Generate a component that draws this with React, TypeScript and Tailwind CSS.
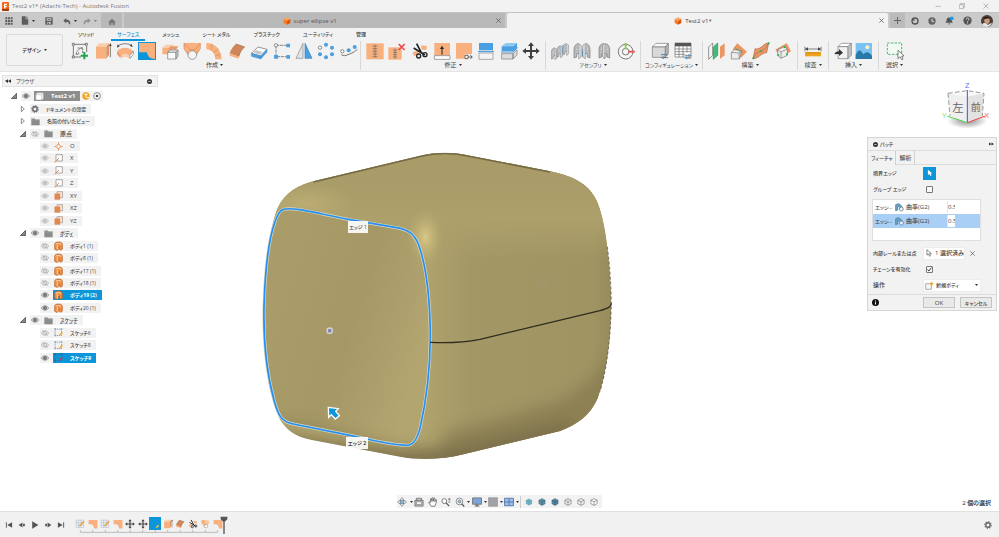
import { useState, type ReactNode } from 'react'

type P = { children?: ReactNode; className?: string }

/* ---------- icon helpers ---------- */

// ribbon icons are drawn on a 54 unit grid
function R({ children, className = 'h-[18px] w-[18px]' }: P) {
  return (
    <svg viewBox="0 0 54 54" className={`shrink-0 ${className}`} fill="none" aria-hidden="true">
      {children}
    </svg>
  )
}

const OR = '#f8b07f'
const BL = '#4a9fe0'
const DK = '#404040'

const MoveArrows = () => (
  <path
    d="M27 1l9 11h-6v12h12v-6l11 9-11 9v-6H30v12h6l-9 11-9-11h6V30H12v6L1 27l11-9v6h12V12h-6z"
    fill={DK}
  />
)

const createIcons: [string, ReactNode][] = [
  ['スケッチを作成', <>
    <path d="M11 7H46M7 12V42M12 45H30M47 12V30" stroke={DK} strokeWidth="2" />
    <path d="M4 4h6v6H4zM43 4h6v6h-6zM4 42h6v6H4z" fill="#fff" stroke={DK} strokeWidth="2" />
    <path d="M15 37c2-10 8-17 20-20M15 37h8v-6M20 18h15v15" stroke={DK} strokeWidth="2" strokeDasharray="6 2" />
    <path d="M40 30v22M29 41h22" stroke="#19a84b" strokeWidth="6" />
  </>],
  ['押し出し', <>
    <path d="M6 14l8-10h32l-8 10z" fill="#fbcfae" />
    <path d="M6 14h31v36H6z" fill={OR} />
    <path d="M37 14l8-10v34l-8 12z" fill="#dc9361" />
    <path d="M49 46V10" stroke={DK} strokeWidth="2" />
    <path d="M49 3l4 9h-8z" fill={DK} />
  </>],
  ['回転', <>
    <path d="M5 13C16 3 36 3 47 11" stroke={DK} strokeWidth="2" />
    <path d="M3 17l2-10 6 6zM50 15l-9-3 6-6z" fill={DK} />
    <path d="M3 28c10-14 38-14 49 0L41 41c-6-6-20-6-26 0z" fill={OR} />
    <path d="M3 28v9l10 11 3-8z" fill="#e79c69" />
    <path d="M15 41c6-6 20-6 26 0v9c-7-7-19-7-26 0z" fill="#fbcfae" />
    <path d="M41 41l11-13v9L42 49z" fill="#fff" stroke="#777" strokeWidth="2" />
  </>],
  ['パッチ', <>
    <path d="M0 0h54v54H0z" fill="#0c95d8" />
    <path d="M3 3h48v48c-14 0-22-7-24-20H3z" fill={OR} />
  </>],
  ['スイープ', <>
    <path d="M4 17l10-9h26l-8 9z" fill="#fbcfae" />
    <path d="M4 17h28v20H4z" fill={OR} />
    <path d="M19 22l10-9h23l-7 10z" fill="#e79c69" />
    <path d="M20 31l7-7h24l-6 7z" fill="#eee" stroke="#777" strokeWidth="2" />
    <path d="M20 31h25v20H20z" fill="#fafafa" stroke="#777" strokeWidth="2" />
    <path d="M45 31l6-7v18l-6 9z" fill="#ccc" stroke="#777" strokeWidth="2" />
  </>],
  ['ロフト', <>
    <path d="M3 3h49v17L38 44H17L3 20z" fill={OR} />
    <path d="M3 3l18 21h14L52 3M3 3v17l14 20M52 3v17L38 40" stroke="#d68a58" strokeWidth="2" />
    <circle cx="28" cy="39" r="13" fill="#f4f4f4" stroke="#777" strokeWidth="2" />
  </>],
  ['オフセット', <>
    <path d="M4 3c26 0 45 20 46 49H31C31 34 20 23 4 22z" fill={OR} />
    <path d="M21 5l-3 20M41 20L25 32M47 36l-17 6" stroke="#d68a58" strokeWidth="2" />
  </>],
  ['厚み', <>
    <path d="M5 34C9 21 17 11 24 6l26 9c-8 5-14 16-18 29z" fill="#cf8759" />
    <path d="M24 6l26 9c-8 5-14 16-18 29" stroke="#9c6240" strokeWidth="2" />
    <path d="M5 34l27 10v6L5 41z" fill={OR} />
  </>],
  ['境界塗り潰し', <>
    <path d="M4 34l20-19 27 7-19 20z" fill="#fafafa" stroke="#666" strokeWidth="2" />
    <path d="M4 34l28 8v9L4 43zM32 42l19-20v9L32 51z" fill={BL} stroke="#2f7fb9" strokeWidth="1" />
    <path d="M11 32l7-7 19 5-7 8z" fill="#bfc6cc" />
  </>],
  ['矩形状パターン', <>
    <path d="M9 10H45M9 10V44H45" stroke="#555" strokeWidth="2" strokeDasharray="10 2" />
    <circle cx="9" cy="10" r="5" fill="#fff" stroke="#555" strokeWidth="2" />
    <path d="M40 5h11v11H40zM3 39h12v11H3zM40 39h11v11H40z" fill={BL} />
  </>],
  ['ミラー', <>
    <path d="M24 4v45H3z" fill="#e3e3e3" stroke="#888" strokeWidth="2" />
    <path d="M30 4v45h21z" fill={BL} stroke="#3987c4" strokeWidth="2" />
  </>],
  ['円形状パターン', <>
    <circle cx="27" cy="8" r="6" fill={BL} />
    <circle cx="45" cy="17" r="6" fill={BL} />
    <circle cx="45" cy="37" r="6" fill={BL} />
    <circle cx="27" cy="46" r="6" fill={BL} />
    <circle cx="9" cy="37" r="6" fill={BL} />
    <circle cx="9" cy="17" r="5" fill="#fff" stroke="#555" strokeWidth="2" />
  </>],
  ['パス上のパターン', <>
    <path d="M4 38c7 5 14 3 20 0s17-5 28-16" stroke="#777" strokeWidth="3" />
    <circle cx="7" cy="28" r="5" fill="#fff" stroke="#555" strokeWidth="2" />
    <circle cx="26" cy="25" r="6" fill={BL} />
    <circle cx="44" cy="15" r="6" fill={BL} />
  </>],
]

const modifyIcons: [string, ReactNode][] = [
  ['ステッチ', <>
    <path d="M1 4h52v48H1z" fill={OR} />
    <path d="M27 8v38M20 12h14M20 20h14M20 28h14M20 36h14M20 44h14" stroke="#666" strokeWidth="2" />
  </>],
  ['ステッチ解除', <>
    <path d="M1 16h40v37H1z" fill={OR} />
    <path d="M21 20v30M15 24h12M15 31h12M15 38h12M15 45h12" stroke="#666" strokeWidth="2" />
    <path d="M32 6l18 18M50 6L32 24" stroke="#ee4a4f" strokeWidth="5" />
  </>],
  ['トリム', <>
    <path d="M4 33l14-8 6 10-14 8zM30 10l18 2-2 12-14-1z" fill={OR} />
    <path d="M17 5l15 29M8 18l34 21" stroke="#222" strokeWidth="5" />
    <circle cx="23" cy="42" r="6" stroke="#222" strokeWidth="4" />
    <circle cx="42" cy="38" r="6" stroke="#222" strokeWidth="4" />
  </>],
  ['延長', <>
    <path d="M4 3h47v38H4z" fill={OR} />
    <path d="M4 41h47v11H4z" fill="#fff" stroke="#777" strokeWidth="2" />
    <path d="M27 38V18" stroke="#222" strokeWidth="3" />
    <path d="M27 11l6 10H21z" fill="#222" />
  </>],
  ['マージ', <>
    <path d="M3 3h48v34H29v13H3z" fill={OR} />
    <path d="M30 40h9v10h-9zM39 45h12M46 40l6 5-6 5" fill="#fff" stroke="#222" strokeWidth="2" />
  </>],
  ['面を分割', <>
    <path d="M6 3h42v22H6z" fill={BL} />
    <path d="M6 33h42v19H6z" fill="#f4f4f4" stroke="#888" strokeWidth="2" />
    <path d="M3 29h48" stroke="#3a95da" strokeWidth="3" />
  </>],
  ['ボディを分割', <>
    <path d="M5 13l12-10h34l-11 10z" fill="#8ec9f2" />
    <path d="M5 13h35v14H5zM40 13L51 3v14L40 28z" fill={BL} />
    <path d="M3 30h36l14-13" stroke="#3a95da" strokeWidth="3" />
    <path d="M5 35h34v16H5zM39 35l12-11v15L39 51z" fill="#dedede" stroke="#777" strokeWidth="2" />
  </>],
  ['移動/コピー', <MoveArrows />],
]

const Plate = ({ x = 0 }: { x?: number }) => (
  <g transform={`translate(${x} 0)`}>
    <path d="M2 48V22C2 12 8 5 15 5l8 5v34l-6 6V34l-7 2v9z" fill="#b9bcbf" stroke="#777" strokeWidth="2" />
    <path d="M15 5l8 5v34l-6 6V14z" fill="#dcdedf" stroke="#888" strokeWidth="1" />
    <circle cx="10" cy="22" r="3" fill="#f3f3f3" stroke="#777" />
  </g>
)

const assemblyIcons: [string, ReactNode][] = [
  ['新規コンポーネント', <>
    <g transform="translate(-1 14) scale(.78)"><Plate /></g>
    <g transform="translate(16 8) scale(.78)"><Plate /></g>
    <g transform="translate(34 1) scale(.78)"><Plate /></g>
    <path d="M34 8v24" stroke={BL} strokeWidth="2" />
  </>],
  ['ジョイント', <>
    <Plate x={1} />
    <path d="M29 44c-2-14 0-26 7-31" stroke={BL} strokeWidth="3" />
    <g transform="translate(54 0) scale(-1 1)"><Plate x={1} /></g>
  </>],
  ['位置固定ジョイント', <>
    <Plate x={10} />
    <g transform="translate(54 0) scale(-1 1)"><Plate x={8} /></g>
  </>],
  ['モーション', <>
    <circle cx="26" cy="29" r="22" fill="#f6f6f6" stroke="#777" strokeWidth="3" />
    <circle cx="26" cy="29" r="10" stroke="#777" strokeWidth="3" />
    <path d="M23 3h6v19h-6z" fill="#8fce5b" />
    <path d="M34 26h19v6H34z" fill="#ee5357" />
  </>],
]

const configIcons: [string, ReactNode][] = [
  ['コンフィギュレーション', <>
    <path d="M4 15L15 4h37L43 15z" fill="#f8f8f8" stroke="#777" strokeWidth="2" />
    <path d="M4 15h39v31H4z" fill="#d8d8d8" stroke="#777" strokeWidth="2" />
    <path d="M43 15l9-11v29L43 46z" fill="#b5b5b5" stroke="#777" strokeWidth="2" />
    <path d="M30 38h22M30 47h22" stroke="#444" strokeWidth="2" />
    <path d="M41 34h4v8h-4zM35 43h4v8h-4z" fill={BL} />
  </>],
  ['パラメータ表', <>
    <path d="M3 3h48v42H3z" fill="#fff" stroke="#666" strokeWidth="2" />
    <path d="M3 3h48v10H3z" fill="#555" />
    <path d="M3 21h48M3 29h48M3 37h30M15 13v32M27 13v32M39 13v18" stroke="#666" strokeWidth="2" />
    <path d="M32 40h20M32 48h20" stroke="#444" strokeWidth="2" />
    <path d="M43 36h4v8h-4zM36 44h4v8h-4z" fill={BL} />
  </>],
]

const constructIcons: [string, ReactNode][] = [
  ['オフセット平面', <>
    <path d="M2 15L14 3v37L2 52z" fill="#f4f4f4" stroke="#666" strokeWidth="2" />
    <path d="M16 15L29 3v37L16 52z" fill="#45b97a" stroke="#2c8b58" strokeWidth="2" />
    <path d="M36 14L50 4v36L36 51z" fill="#ec9763" />
  </>],
  ['傾斜平面', <>
    <path d="M22 4l29 25-18 18L8 22z" fill="#ec9763" />
    <path d="M4 31l9-8 22 3-7 25H4z" fill="#ececec" stroke="#777" strokeWidth="2" />
    <path d="M28 51l-1-18L4 31M27 33l8-7" stroke="#777" strokeWidth="2" />
    <path d="M14 16l22 17" stroke="#2fae62" strokeWidth="2" />
  </>],
  ['3点を通過する平面', <>
    <path d="M3 50L9 20C25 26 34 3 50 3l-6 29C28 32 20 50 3 50z" fill="#ec9763" stroke="#a86a43" strokeWidth="2" />
    <path d="M3 50C18 16 36 38 50 3" stroke="#777" strokeWidth="2" />
    <circle cx="4" cy="49" r="3" fill="#27ac5a" /><circle cx="50" cy="4" r="3" fill="#27ac5a" /><circle cx="27" cy="27" r="3" fill="#27ac5a" />
  </>],
  ['平面に接する平面', <>
    <path d="M4 23L38 3l13 25-31 20z" fill="#ec9763" />
    <path d="M11 23l20-9 9 7v19l-19 9-10-8z" fill="#ececec" stroke="#777" strokeWidth="2" />
    <path d="M11 23l10 7 19-9M21 30v19" stroke="#777" strokeWidth="2" />
    <circle cx="13" cy="39" r="3" fill="#27ac5a" /><circle cx="32" cy="15" r="3" fill="#27ac5a" /><circle cx="39" cy="37" r="3" fill="#27ac5a" />
  </>],
]

const inspectIcons: [string, ReactNode][] = [
  ['計測', <>
    <path d="M3 14v14M51 14v14M5 21h44" stroke="#444" strokeWidth="2" />
    <path d="M3 21l9-5v10zM51 21l-9-5v10z" fill="#444" />
    <path d="M3 30h48v13H3z" fill="#eda31f" />
    <path d="M9 30v5M15 30v5M21 30v5M27 30v5M33 30v5M39 30v5M45 30v5" stroke="#b97a10" strokeWidth="2" />
  </>],
]

const insertIcons: [string, ReactNode][] = [
  ['派生', <>
    <path d="M12 14L22 4h30L42 14z" fill="#fff" stroke="#777" strokeWidth="2" />
    <path d="M12 14h30v36H12z" fill="#f2f2f2" stroke="#777" strokeWidth="2" />
    <path d="M42 14L52 4v35L42 50z" fill="#c5c5c5" stroke="#777" strokeWidth="2" />
    <path d="M1 37c2-6 7-9 14-9v-7l12 11-12 10v-6c-6 0-10 0-14 1z" fill="#333" />
  </>],
  ['キャンバス', <>
    <path d="M2 3h49v48H2z" fill="#7cc1f3" />
    <path d="M2 39c9-20 15-16 23-2 9-9 15-9 26 4v10H2z" fill="#2878a8" />
    <circle cx="37" cy="16" r="6" fill="#fff4c4" />
  </>],
]

const selectIcons: [string, ReactNode][] = [
  ['選択', <>
    <path d="M4 3h43v34H4z" fill="#f0faf2" stroke="#49b56b" strokeWidth="3" strokeDasharray="7 4" />
    <path d="M36 25v25l6-6 5 9 4-2-4-9h8z" fill="#fff" stroke="#444" strokeWidth="2" />
  </>],
]

/* ---------- shared bits ---------- */

const Caret = ({ className = '' }: P) => (
  <svg viewBox="0 0 6 4" className={`h-[2px] w-[3px] shrink-0 ${className}`} aria-hidden="true">
    <path d="M0 0h6L3 4z" fill="#333" />
  </svg>
)

function FusionCube({ className = 'h-[8px] w-[8px]' }: P) {
  return (
    <svg viewBox="0 0 24 24" className={className} aria-hidden="true">
      <path d="M12 1l10 5-10 5L2 6z" fill="#ffa45c" />
      <path d="M2 6l10 5v12L2 18z" fill="#ff7a1f" />
      <path d="M22 6l-10 5v12l10-5z" fill="#d9560b" />
    </svg>
  )
}

function Group({ label, icons, className }: { label: string; icons: [string, ReactNode][]; className: string }) {
  return (
    <div className={`flex shrink-0 flex-col border-r border-[#d8d8d8] ${className}`}>
      <div className="flex h-[19px] items-center justify-around">
        {icons.map(([name, art]) => (
          <button key={name} aria-label={name} title={name} className="flex">
            <R>{art}</R>
          </button>
        ))}
      </div>
      <button className="flex h-[10px] items-center justify-center gap-[2px] self-center whitespace-nowrap">
        {label}
        <Caret />
      </button>
    </div>
  )
}

/* ---------- top bars ---------- */

function TitleBar() {
  return (
    <div className="flex h-[12px] items-center bg-[#f2f2f2] pl-[2px] text-[#777]">
      <svg viewBox="0 0 24 27" className="mr-[2px] h-[9px] w-[8px]" aria-hidden="true">
        <rect width="21" height="27" rx="3" fill="#f26a1b" />
        <path d="M6 5h9v4h-5v3h4v4h-4v4H6z" fill="#fff" />
        <path d="M0 20h21v4q0 3-3 3H3q-3 0-3-3z" fill="#a53c06" />
      </svg>
      <span className="flex-1">Test2 v1* (Adachi-Tech) - Autodesk Fusion</span>
      <div className="flex gap-[18px] pr-[10px]">
        <button aria-label="最小化"><svg viewBox="0 0 14 14" className="h-[6px] w-[6px]" stroke="#777" fill="none"><path d="M1 8h13" /></svg></button>
        <button aria-label="元に戻す"><svg viewBox="0 0 14 14" className="h-[6px] w-[6px]" stroke="#777" fill="none"><path d="M1 4h9v9H1zM4 4V1h9v9h-3" /></svg></button>
        <button aria-label="閉じる"><svg viewBox="0 0 14 14" className="h-[6px] w-[6px]" stroke="#666" fill="none"><path d="M1 1l12 12M13 1L1 13" /></svg></button>
      </div>
    </div>
  )
}

const CloseX = () => (
  <svg viewBox="0 0 14 14" className="h-[5px] w-[5px]" stroke="#555" strokeWidth="2" fill="none" aria-hidden="true">
    <path d="M1 1l12 12M13 1L1 13" />
  </svg>
)

function TabBar() {
  return (
    <div className="flex h-[16px] border-t border-[#c4c4c4] bg-[#cacaca] text-[#555]">
      <div className="flex w-[101px] shrink-0 items-center pl-[5px] text-[#5c5c5c]">
        <button aria-label="データパネル">
          <svg viewBox="0 0 24 24" className="h-[8px] w-[8px]" fill="#5c5c5c">
            <path d="M1 1h6v6H1zM9 1h6v6H9zM17 1h6v6h-6zM1 9h6v6H1zM9 9h6v6H9zM17 9h6v6h-6zM1 17h6v6H1zM9 17h6v6H9zM17 17h6v6h-6z" />
          </svg>
        </button>
        <button aria-label="ファイル" className="ml-2 flex items-center gap-[3px]">
          <svg viewBox="0 0 24 28" className="h-[9px] w-[8px]" fill="#5c5c5c"><path d="M2 1h12v9h8v17H2z" /><path d="M16 1l6 7h-6z" /></svg>
          <Caret />
        </button>
        <button aria-label="保存" className="ml-[10px]">
          <svg viewBox="0 0 24 24" className="h-[8px] w-[8px]"><path d="M1 1h22v22H1z" fill="#5c5c5c" /><path d="M5 4h14v7H5zM7 15h10v6H7z" fill="#cacaca" /><path d="M8 6h8v2H8zM9 17h3v4H9z" fill="#5c5c5c" /></svg>
        </button>
        <button aria-label="元に戻す" className="ml-[10px] flex items-center gap-[3px]">
          <svg viewBox="0 0 24 24" className="h-[8px] w-[8px]"><path d="M10 3v5c9 0 13 5 12 14h-4c0-6-3-8-8-8v5l-9-8z" fill="#5c5c5c" /></svg>
          <Caret />
        </button>
        <button aria-label="やり直し" className="ml-[6px] flex items-center gap-[3px] opacity-50">
          <svg viewBox="0 0 24 24" className="h-[8px] w-[8px]"><path d="M14 3v5C5 8 1 13 2 22h4c0-6 3-8 8-8v5l9-8z" fill="#5c5c5c" /></svg>
          <Caret />
        </button>
      </div>
      <button aria-label="ホーム" className="flex w-[21px] shrink-0 items-center justify-center bg-[#b9b9b9] pt-[2px]">
        <svg viewBox="0 0 24 24" className="h-[8px] w-[8px]" fill="#777"><path d="M12 2l12 11h-4v9h-6v-7h-4v7H4v-7-2H0z" /></svg>
      </button>
      <div className="ml-[2px] flex flex-1 items-center bg-[#b9b9b9] pr-[4px]">
        <button className="flex flex-1 items-center justify-center gap-[2px]"><FusionCube />super ellipse v1</button>
        <button aria-label="super ellipse v1 を閉じる"><CloseX /></button>
      </div>
      <div className="ml-[2px] flex flex-1 items-center rounded-t-[2px] bg-[#f2f2f2] pr-[4px] text-[#444]">
        <button className="flex flex-1 items-center justify-center gap-[3px]"><FusionCube />Test2 v1*</button>
        <button aria-label="Test2 v1* を閉じる"><CloseX /></button>
      </div>
      <button aria-label="新規タブ" className="ml-[2px] flex w-[15px] shrink-0 items-center justify-center bg-[#bbb]">
        <svg viewBox="0 0 14 14" className="h-[7px] w-[7px]" stroke="#666" strokeWidth="2"><path d="M7 0v14M0 7h14" /></svg>
      </button>
      <div className="flex w-[94px] shrink-0 items-center gap-[9px] pl-[6px]">
        <button aria-label="拡張機能"><svg viewBox="0 0 24 24" className="h-[8px] w-[8px]" fill="none"><circle cx="12" cy="12" r="9" stroke="#555" strokeWidth="4" /><path d="M8 4l4 8-8-2z" fill="#555" /></svg></button>
        <button aria-label="ジョブの状態"><svg viewBox="0 0 24 24" className="h-[8px] w-[8px]"><circle cx="12" cy="12" r="11" fill="#666" /><path d="M12 5v8h6" stroke="#ddd" strokeWidth="3" fill="none" /></svg></button>
        <button aria-label="通知"><svg viewBox="0 0 24 24" className="h-[9px] w-[9px]"><path d="M11 4c6 0 7 5 7 9l3 5H1l3-5c0-4 1-9 7-9zM8 20h6l-3 3z" fill="#555" /><circle cx="18" cy="6" r="5" fill="#1e9ae0" /></svg></button>
        <button aria-label="ヘルプ"><svg viewBox="0 0 24 24" className="h-[9px] w-[9px]"><circle cx="12" cy="12" r="11" fill="#555" /><path d="M8 9c0-5 8-5 8 0 0 3-4 3-4 6M12 17v3" stroke="#eee" strokeWidth="2" fill="none" /></svg></button>
        <button aria-label="アカウント">
          <svg viewBox="0 0 36 36" className="h-[12px] w-[12px]">
            <circle cx="18" cy="18" r="18" fill="#4b3b34" />
            <path d="M10 14c0-8 16-8 16 0v7c-3 8-13 8-16 0z" fill="#c99a80" />
            <path d="M3 28c6-6 10-4 15 0s9-4 15-4c-5 14-24 16-30 4z" fill="#e4e6ea" />
            <path d="M8 12C10 3 26 2 28 13l-5-3-8 1z" fill="#241c1a" />
          </svg>
        </button>
      </div>
    </div>
  )
}

const ribbonTabs = ['ソリッド', 'サーフェス', 'メッシュ', 'シート メタル', 'プラスチック', 'ユーティリティ', '管理']

function Ribbon() {
  const [tab, setTab] = useState('サーフェス')
  return (
    <div className="flex h-[44px] shrink-0 border-b border-[#e4e4e4] bg-[#f2f2f2]">
      <button className="mt-[6px] ml-[6px] flex h-[32px] w-[57px] shrink-0 items-center justify-center gap-[3px] rounded-[2px] border border-[#dadada] text-[5px] font-bold">
        デザイン
        <Caret />
      </button>
      <div className="ml-[6px] flex flex-col">
        <div className="flex h-[13px] items-end gap-[11px] pl-[3px] text-[5px]">
          {ribbonTabs.map(t => (
            <button
              key={t}
              onClick={() => setTab(t)}
              className={`h-[12px] border-b-2 px-[6px] font-medium whitespace-nowrap ${
                t === tab ? 'border-[#0c95d8] text-[#0c95d8]' : 'border-transparent'
              }`}
            >
              {t}
            </button>
          ))}
        </div>
        <div className="flex">
          <Group label="作成" icons={createIcons} className="w-[292px]" />
          <Group label="修正" icons={modifyIcons} className="w-[185px] px-[3px]" />
          <Group label="アセンブリ" icons={assemblyIcons} className="w-[95px] px-[3px] text-[5px]" />
          <Group label="コンフィギュレーション" icons={configIcons} className="w-[62px] px-[7px] text-[5px]" />
          <Group label="構築" icons={constructIcons} className="w-[95px] px-[3px]" />
          <Group label="検査" icons={inspectIcons} className="w-[31px]" />
          <Group label="挿入" icons={insertIcons} className="w-[50px] px-[3px]" />
          <Group label="選択" icons={selectIcons} className="w-[32px] border-transparent" />
        </div>
      </div>
    </div>
  )
}

/* ---------- browser tree ---------- */

type Kind = 'root' | 'gear' | 'folder' | 'origin' | 'axis' | 'plane' | 'body' | 'sketch' | 'sketchOn'
type Eye = 'on' | 'dim' | 'off'
interface Node { name: string; kind: Kind; depth: number; eye?: Eye; open?: boolean; selected?: boolean; partial?: boolean }

const tree: Node[] = [
  { name: 'Test2 v1', kind: 'root', depth: 0, eye: 'on', open: true },
  { name: 'ドキュメントの設定', kind: 'gear', depth: 1, open: false },
  { name: '名前の付いたビュー', kind: 'folder', depth: 1, open: false },
  { name: '原点', kind: 'folder', depth: 1, eye: 'off', open: true },
  { name: 'O', kind: 'origin', depth: 2, eye: 'dim' },
  { name: 'X', kind: 'axis', depth: 2, eye: 'dim' },
  { name: 'Y', kind: 'axis', depth: 2, eye: 'dim' },
  { name: 'Z', kind: 'axis', depth: 2, eye: 'dim' },
  { name: 'XY', kind: 'plane', depth: 2, eye: 'dim' },
  { name: 'XZ', kind: 'plane', depth: 2, eye: 'dim' },
  { name: 'YZ', kind: 'plane', depth: 2, eye: 'dim' },
  { name: 'ボディ', kind: 'folder', depth: 1, eye: 'on', open: true, partial: true },
  { name: 'ボディ1 (1)', kind: 'body', depth: 2, eye: 'off' },
  { name: 'ボディ8 (1)', kind: 'body', depth: 2, eye: 'off' },
  { name: 'ボディ17 (1)', kind: 'body', depth: 2, eye: 'off' },
  { name: 'ボディ18 (1)', kind: 'body', depth: 2, eye: 'off' },
  { name: 'ボディ19 (2)', kind: 'body', depth: 2, eye: 'on', selected: true },
  { name: 'ボディ20 (1)', kind: 'body', depth: 2, eye: 'on' },
  { name: 'スケッチ', kind: 'folder', depth: 1, eye: 'on', open: true, partial: true },
  { name: 'スケッチ6', kind: 'sketch', depth: 2, eye: 'off' },
  { name: 'スケッチ8', kind: 'sketch', depth: 2, eye: 'off' },
  { name: 'スケッチ9', kind: 'sketchOn', depth: 2, eye: 'on', selected: true },
]

function EyeIcon({ state }: { state: Eye }) {
  const c = state === 'on' ? '#777' : state === 'dim' ? '#c2c2c2' : '#aaa'
  return (
    <svg viewBox="0 0 24 18" className="h-[6px] w-[8px]" fill="none" aria-hidden="true">
      <path d="M1 9c6-9 16-9 22 0-6 9-16 9-22 0z" stroke={c} strokeWidth="2" fill={state === 'off' ? 'none' : '#e4e4e4'} />
      <circle cx="12" cy="9" r="5" fill={state === 'off' ? 'none' : c} stroke={c} strokeWidth="2" />
      {state === 'off' && <path d="M4 1l17 16" stroke={c} strokeWidth="2" />}
    </svg>
  )
}

function NodeIcon({ kind }: { kind: Kind }) {
  switch (kind) {
    case 'root':
      return <R className="h-[9px] w-[9px]"><path d="M5 16L14 5h36v32L40 48H5z" fill="#fff" stroke="#aaa" strokeWidth="4" /><path d="M5 16h35v32M40 16L50 5" stroke="#aaa" strokeWidth="3" /></R>
    case 'gear':
      return <R className="h-[8px] w-[8px]"><circle cx="27" cy="27" r="15" stroke="#666" strokeWidth="9" /><circle cx="27" cy="27" r="22" stroke="#666" strokeWidth="7" strokeDasharray="9 8" /></R>
    case 'folder':
      return <R className="h-[9px] w-[9px]"><path d="M2 9h20l5 6h25v34H2z" fill="#8b8b8b" /><path d="M2 18h50" stroke="#aaa" strokeWidth="3" /></R>
    case 'origin':
      return <R className="h-[9px] w-[9px]"><path d="M27 12l15 15-15 15-15-15z" stroke="#e28a52" strokeWidth="6" /><path d="M27 2v12M27 40v12M2 27h12M40 27h12" stroke="#e28a52" strokeWidth="5" /></R>
    case 'axis':
      return <R className="h-[9px] w-[9px]"><path d="M12 4h38v38H12z" fill="#fff" stroke="#999" strokeWidth="5" /><path d="M3 51l27-27" stroke="#e28a52" strokeWidth="6" /></R>
    case 'plane':
      return <R className="h-[9px] w-[9px]"><path d="M18 4h33v36H18z" fill="#f3e6dc" stroke="#a58d7f" strokeWidth="4" /><path d="M3 15h34v37H3z" fill="#e08850" /></R>
    case 'body':
      return <R className="h-[10px] w-[9px]"><path d="M4 16C4 8 14 3 27 3s23 5 23 13v30l-9 6-8-5V33l-7 3v14l-9 3-13-6z" fill="#ef8e42" stroke="#b35a18" strokeWidth="4" /><path d="M10 17c8-6 26-6 34 0M20 22v26" stroke="#ffe0c2" strokeWidth="5" /></R>
    case 'sketch':
    case 'sketchOn': {
      const on = kind === 'sketchOn'
      return (
        <R className="h-[9px] w-[9px]">
          <path d="M7 7h38v38H7z" stroke={on ? '#47687d' : '#777'} strokeWidth="4" strokeDasharray="8 4" />
          <path d="M2 2h9v9H2zM41 2h9v9h-9zM2 41h9v9H2z" fill={on ? '#315b78' : '#79aed6'} />
          <path d="M28 48l4-9 16-16 6 6-16 16z" fill={on ? '#cf3645' : '#f3a431'} />
        </R>
      )
    }
  }
}

function Twisty({ open }: { open?: boolean }) {
  return (
    <svg viewBox="0 0 18 18" className="h-[6px] w-[6px]" aria-hidden="true">
      {open ? <path d="M17 1v16H1z" fill="#888" stroke="#333" strokeWidth="2" /> : <path d="M4 1l9 8-9 8z" fill="#fff" stroke="#555" strokeWidth="2" />}
    </svg>
  )
}

function TreeRow({ node }: { node: Node }) {
  const pad = node.depth === 0 ? 'pl-[11px]' : node.depth === 1 ? 'pl-[20px]' : 'pl-[40px]'
  // names with kana run one step smaller
  const size = /[\u3040-\u30ff]/.test(node.name) ? 'text-[5px]' : ''
  return (
    <li className={`flex items-center ${pad}`}>
      {node.depth < 2 && (
        <button aria-label={`${node.name} を展開`} className="mr-[4px] flex w-[6px] shrink-0"><Twisty open={node.open} /></button>
      )}
      <div className="flex h-[10px] items-center bg-[#f2f2f2]">
        {node.eye && (
          <button aria-label={`${node.name} の表示`} className="flex w-[13px] pl-px"><EyeIcon state={node.eye} /></button>
        )}
        <button
          className={`flex h-[10px] items-center whitespace-nowrap ${
            node.kind === 'root' ? 'bg-[#8e8e8e] px-px font-bold text-white'
            : node.selected ? 'bg-[#0c95d8] px-px font-bold text-white'
            : 'px-px font-medium'
          }`}
        >
          <NodeIcon kind={node.kind} />
          <span className={`pr-[4px] pl-[7px] ${size} ${node.partial ? 'underline decoration-[#8d9ec0] decoration-dashed' : ''}`}>{node.name}</span>
        </button>
        {node.kind === 'root' && (
          <span className="flex items-center gap-[3px] px-[2px]">
            <svg viewBox="0 0 24 24" className="h-[8px] w-[8px]"><circle cx="12" cy="12" r="11" fill="#f0a51c" /><path d="M7 7h10M12 7v10M15 17h6" stroke="#fff" strokeWidth="3" /></svg>
            <svg viewBox="0 0 24 24" className="h-[8px] w-[8px]" fill="none"><circle cx="12" cy="12" r="10" fill="#fff" stroke="#555" strokeWidth="2" /><circle cx="12" cy="12" r="4" fill="#444" /></svg>
          </span>
        )}
      </div>
    </li>
  )
}

function Browser() {
  return (
    <aside className="w-[158px] pt-[3px] pl-[2px]">
      <div className="flex h-[12px] items-center border border-[#e2e2e2] bg-[#f2f2f2] px-[2px] text-[5px]">
        <svg viewBox="0 0 16 10" className="mr-[5px] h-[4px] w-[6px]"><path d="M8 0v10L0 5zM16 0v10L8 5z" fill="#333" /></svg>
        <span className="flex-1">ブラウザ</span>
        <svg viewBox="0 0 16 16" className="mr-[3px] h-[5px] w-[5px]"><circle cx="8" cy="8" r="8" fill="#333" /><path d="M4 8h8" stroke="#fff" strokeWidth="2" /></svg>
      </div>
      <ul className="mt-[3px] -ml-[2px] grid h-[274px]">
        {tree.map(n => <TreeRow key={n.name} node={n} />)}
      </ul>
    </aside>
  )
}

/* ---------- canvas ---------- */

const BODY = 'M38 505C39 400 58 262 84 202C104 160 142 134 202 121L510 47C560 35 610 35 660 47L900 94C978 110 1018 136 1040 182C1070 250 1080 380 1084 490C1082 600 1070 700 1043 775C1020 828 980 855 930 873L640 943C580 960 500 960 450 950L185 900C132 890 106 866 88 836C50 750 38 640 38 505Z'
const FACE = 'M100 208C135 200 200 220 300 239L440 263C480 271 492 282 505 312C530 380 540 480 541 590C540 700 525 800 510 865C500 903 488 916 470 916C420 915 350 897 300 886L130 852C97 846 85 830 72 780C50 700 40 600 42 500C45 400 55 300 75 245C82 225 90 211 100 208Z'

function Model() {
  return (
    <svg viewBox="0 0 1140 990" className="absolute top-[68px] left-[250px] h-[330px] w-[380px]" fill="none" aria-hidden="true">
      <defs>
        <clipPath id="body"><path d={BODY} /></clipPath>
        <clipPath id="face"><path d={FACE} /></clipPath>
        <linearGradient id="side" x1="520" y1="0" x2="1084" y2="0" gradientUnits="userSpaceOnUse">
          <stop offset="0" stopColor="#b0a36d" /><stop offset=".12" stopColor="#aa9d69" /><stop offset=".26" stopColor="#a39765" />
          <stop offset=".9" stopColor="#a09463" /><stop offset="1" stopColor="#978b5b" />
        </linearGradient>
        <linearGradient id="front" x1="90" y1="420" x2="541" y2="560" gradientUnits="userSpaceOnUse">
          <stop offset="0" stopColor="#a99c68" /><stop offset=".5" stopColor="#a59866" /><stop offset="1" stopColor="#b3a570" />
        </linearGradient>
        <linearGradient id="top" x1="0" y1="40" x2="0" y2="360" gradientUnits="userSpaceOnUse">
          <stop offset="0" stopColor="#a89b67" /><stop offset=".4" stopColor="#aa9d69" /><stop offset=".6" stopColor="#ada06b" /><stop offset="1" stopColor="#ada06b" stopOpacity="0" />
        </linearGradient>
        <radialGradient id="shine"><stop offset="0" stopColor="#d9c985" /><stop offset=".4" stopColor="#c8b97b" stopOpacity=".7" /><stop offset="1" stopColor="#b5a76f" stopOpacity="0" /></radialGradient>
        <radialGradient id="warm"><stop offset="0" stopColor="#bbad72" /><stop offset="1" stopColor="#bbad72" stopOpacity="0" /></radialGradient>
        <filter id="soft" x="-20%" y="-50%" width="140%" height="200%"><feGaussianBlur stdDeviation="22" /></filter>
      </defs>
      <g clipPath="url(#body)">
        <path d={BODY} fill="#b0a36d" />
        <path d="M520 0h600v990H520z" fill="url(#side)" />
        <path d="M0 0h1140v360H0z" fill="url(#top)" />
        <ellipse cx="170" cy="190" rx="150" ry="60" fill="url(#warm)" />
        <path d="M580 880L700 850 940 780 1040 700 1100 640V980H580z" fill="#85794f" opacity=".7" filter="url(#soft)" />
        <path d="M60 880L300 915 450 930 560 925 640 915 960 840 1000 990H60z" fill="#7d714b" filter="url(#soft)" />
        <path d="M190 124L510 47C560 35 610 35 660 47L900 94" stroke="#756b47" strokeWidth="9" />
      </g>
      <g clipPath="url(#face)">
        <path d={FACE} fill="url(#front)" />
        <path d="M60 840L300 890 480 930 560 900 560 990H60z" fill="#85794f" opacity=".8" filter="url(#soft)" />
      </g>
      <ellipse cx="526" cy="292" rx="56" ry="90" fill="url(#shine)" />
      <path d={FACE} stroke="#d8dcc5" strokeWidth="9" />
      <path d={FACE} stroke="#268ef2" strokeWidth="5" />
      <path d="M541 607C600 610 640 608 690 598L1050 512C1075 505 1084 500 1084 490" stroke="#2f2b20" strokeWidth="4" />
      <path d="M1072 320C1080 380 1083 430 1084 490C1082 590 1072 680 1050 755" stroke="#4b4534" strokeWidth="2" strokeDasharray="9 6" />
      <circle cx="239" cy="572" r="8" fill="#7f86b8" stroke="#d9d3d5" strokeWidth="4" />
      <circle cx="880" cy="426" r="8" stroke="#a9977f" strokeWidth="3" />
      <path d="M235 802l30 4-8 8 11 13-12 10-12-13-8 8z" fill="#0c95d8" stroke="#fff" strokeWidth="4" />
    </svg>
  )
}

function ViewCube() {
  return (
    <svg viewBox="0 0 150 150" className="absolute top-[10px] right-[9px] h-[50px] w-[50px]" aria-label="ビューキューブ">
      <defs><radialGradient id="shade"><stop offset="0" stopColor="#888" /><stop offset="1" stopColor="#888" stopOpacity="0" /></radialGradient></defs>
      <ellipse cx="82" cy="116" rx="60" ry="24" fill="url(#shade)" />
      <path d="M24 34L82 26l50 8-50 10z" fill="#f8f8f8" />
      <path d="M24 34l58 10v78l-52-20z" fill="#efefef" />
      <path d="M82 44l50-10-5 68-45 20z" fill="#e2e2e2" />
      <path d="M24 34L82 26l50 8-5 68M24 34l6 68" fill="none" stroke="#999" strokeWidth="3" strokeDasharray="14 7" />
      <path d="M82 24v98" stroke="#4d4de0" strokeWidth="3" />
      <path d="M82 122l54-20" stroke="#ef4a4a" strokeWidth="3" />
      <path d="M82 122l-60-19" stroke="#58d558" strokeWidth="3" />
      <g fontFamily="Noto Sans CJK JP, sans-serif" fill="#666">
        <text x="37" y="90" fontSize="34">左</text>
        <text x="92" y="86" fontSize="30">前</text>
      </g>
      <g fontFamily="Liberation Sans, sans-serif" fontSize="22">
        <text x="75" y="19" fill="#6b6bf0">Z</text>
        <text x="5" y="109" fill="#7be67b">Y</text>
        <text x="133" y="108" fill="#f46b6b">X</text>
      </g>
    </svg>
  )
}

const Tick = ({ className = '' }: P) => (
  <svg viewBox="0 0 16 16" className={`pointer-events-none h-[5px] w-[5px] ${className}`} aria-hidden="true">
    <path d="M2 8l4 5 8-11" stroke="#333" strokeWidth="3" fill="none" />
  </svg>
)

function Check({ id, on }: { id: string; on?: boolean }) {
  const [v, setV] = useState(!!on)
  return (
    <span className="ml-[3px] grid place-items-center *:[grid-area:1/1]">
      <input id={id} type="checkbox" checked={v} onChange={() => setV(!v)} className="h-[7px] w-[7px] appearance-none rounded-[1px] border border-[#777] bg-[#f8f8f8]" />
      {v && <Tick />}
    </span>
  )
}

const Curvature = () => (
  <R className="h-[9px] w-[9px]">
    <path d="M4 46V10l16-6c14 4 22 14 24 30l-9 6C32 28 26 22 16 20v22z" fill="#6aa5c8" stroke="#3e6f8e" strokeWidth="4" />
    <circle cx="38" cy="36" r="12" fill="#e9f1f5" stroke="#4b7287" strokeWidth="4" />
  </R>
)

function PatchDialog() {
  const [picked, setPicked] = useState(1)
  return (
    <section className="absolute top-[65px] right-[2px] w-[130px] border border-[#d6d6d6] bg-[#f2f2f2] text-[5px] font-medium">
      <header className="flex h-[13px] items-center border-b border-[#dcdcdc] px-[5px]">
        <svg viewBox="0 0 16 16" className="mr-[2px] h-[5px] w-[5px]"><circle cx="8" cy="8" r="8" fill="#333" /><path d="M4 8h8" stroke="#fff" strokeWidth="2" /></svg>
        <h2 className="flex-1">パッチ</h2>
        <svg viewBox="0 0 16 10" className="-mr-[3px] h-[4px] w-[5px]"><path d="M0 0l8 5-8 5zM8 0l8 5-8 5z" fill="#333" /></svg>
      </header>
      <div className="flex h-[14px] border-b border-[#dcdcdc]">
        <button className="-mb-px border-r border-[#d0d0d0] bg-[#f2f2f2] px-[3px]">フィーチャ</button>
        <button className="border-r border-[#d0d0d0] px-[3px] text-[6px] text-[#555]">解析</button>
      </div>
      <div className="flex flex-col pr-[15px] pl-[5px]">
        <div className="grid h-[16px] grid-cols-[50px_1fr] items-center">
          <span>境界エッジ</span>
          <button aria-label="境界エッジを選択" className="flex h-[13px] w-[13px] items-center justify-center bg-[#0c95d8]">
            <svg viewBox="0 0 20 26" className="h-[8px] w-[6px]"><path d="M3 2v18l5-4 4 8 3-2-3-7h6z" fill="#fff" /></svg>
          </button>
        </div>
        <div className="grid h-[16px] grid-cols-[50px_1fr] items-center">
          <label htmlFor="grp">グループ エッジ</label>
          <div className="flex"><Check id="grp" /></div>
        </div>
        <div className="mt-[2px] mb-[4px] -ml-px h-[42px] border border-[#dedede] bg-white">
          <table className="w-full table-fixed">
            <colgroup><col className="w-[22px]" /><col className="w-[52px]" /><col /></colgroup>
            <tbody>
              {['エッジ 1', 'エッジ 2'].map((e, i) => (
                <tr key={e} onClick={() => setPicked(i)} className={`h-[14px] ${picked === i ? 'bg-[#a9cff7]' : ''}`}>
                  <td className="p-0 pl-[2px] whitespace-nowrap">エッシ...</td>
                  <td className="p-0 text-[6px]"><span className="flex items-center gap-[2px] whitespace-nowrap"><Curvature />曲率(G2)</span></td>
                  <td className="p-0 text-[6px]">
                    <input aria-label={`${e} の重み`} defaultValue="0.5" className="block h-[12px] w-[8px] overflow-hidden border-l border-[#e4e4e4] bg-white" />
                  </td>
                </tr>
              ))}
            </tbody>
          </table>
        </div>
        <div className="grid h-[16px] grid-cols-[50px_1fr] items-center">
          <span className="whitespace-nowrap">内部レールまたは点</span>
          <div className="flex items-center justify-between">
            <button className="flex h-[13px] w-[42px] items-center gap-[3px] border border-[#ececec] bg-white pl-[2px] text-[6px] whitespace-nowrap">
              <svg viewBox="0 0 20 26" className="h-[8px] w-[6px] shrink-0"><path d="M3 2v18l5-4 4 8 3-2-3-7h6z" fill="#fff" stroke="#444" strokeWidth="2" /></svg>
              1 選択済み
            </button>
            <button aria-label="選択をクリア" className="mr-[6px]"><CloseX /></button>
          </div>
        </div>
        <div className="grid h-[16px] grid-cols-[50px_1fr] items-center">
          <label htmlFor="chain" className="whitespace-nowrap">チェーンを有効化</label>
          <div className="flex"><Check id="chain" on /></div>
        </div>
        <div className="grid h-[16px] grid-cols-[50px_1fr] items-center">
          <label htmlFor="op" className="text-[6px]">操作</label>
          <div className="grid items-center *:[grid-area:1/1]">
            <select id="op" className="h-[13px] w-full appearance-none border border-[#ececec] bg-white pl-[12px]">
              <option>新規ボディ</option>
            </select>
            <R className="pointer-events-none ml-[2px] h-[9px] w-[9px]">
              <path d="M4 16h34v34H4z" fill="#f5f5f5" stroke="#888" strokeWidth="4" /><path d="M40 2l4 9 9 1-7 6 2 9-8-5-8 5 2-9-7-6 9-1z" fill="#f5a623" />
            </R>
            <Caret className="pointer-events-none mr-[3px] justify-self-end" />
          </div>
        </div>
      </div>
      <footer className="mt-px flex h-[16px] items-center gap-[5px] border-t border-[#dcdcdc] pr-[4px] pl-[4px]">
        <svg viewBox="0 0 20 20" className="h-[7px] w-[7px]"><circle cx="10" cy="10" r="10" fill="#111" /><path d="M10 4v3M10 9v7" stroke="#fff" strokeWidth="3" /></svg>
        <button className="ml-auto h-[11px] w-[32px] border border-[#c4c4c4] bg-[#e9e9e9] text-[6px]">OK</button>
        <button className="h-[11px] w-[32px] border border-[#c4c4c4] bg-[#e9e9e9] whitespace-nowrap">キャンセル</button>
      </footer>
    </section>
  )
}

const shades = ['#6fb3c4', '#5d93a5', '#4c8aa0']

function NavBar() {
  const wire = 'M27 4l21 11v24L27 50 6 39V15z'
  return (
    <div className="absolute inset-x-0 bottom-[3px] flex justify-center">
      <div className="flex h-[13px] items-center bg-[#f2f2f2] pr-[4px]">
        <button aria-label="オービット" className="flex w-[17px] items-center gap-[3px]"><R className="h-[10px] w-[10px]"><ellipse cx="27" cy="27" rx="23" ry="9" stroke="#777" strokeWidth="4" /><ellipse cx="27" cy="27" rx="9" ry="23" stroke="#777" strokeWidth="4" /><path d="M18 27h18M27 18v18" stroke={BL} strokeWidth="5" /></R><Caret /></button>
        <button aria-label="ビュー正面" className="flex w-[14px]"><R className="h-[10px] w-[10px]"><path d="M5 18h44v31H5z" fill="#ccc" stroke="#555" strokeWidth="4" /><path d="M13 18V7h28v11M20 7v8M33 7v8" stroke="#666" strokeWidth="4" /><path d="M13 26h28v14H13z" fill="#fff" stroke="#666" strokeWidth="3" /></R></button>
        <button aria-label="画面移動" className="flex w-[13px]"><R className="h-[10px] w-[10px]"><path d="M18 50L4 31c-1-5 5-5 9 0V12c0-5 6-5 7 0l1 12V7c0-5 7-5 7 0v16l2-15c1-5 7-4 7 1v16l3-9c2-4 7-3 6 2-2 12-3 22-9 32z" fill="#fff" stroke="#555" strokeWidth="4" /></R></button>
        <button aria-label="ズーム" className="flex w-[14px]"><R className="h-[10px] w-[10px]"><circle cx="18" cy="22" r="13" fill="#fff" stroke="#555" strokeWidth="4" /><path d="M28 32l16 17" stroke="#555" strokeWidth="7" /><path d="M38 12h14M45 5v14M38 27h14" stroke="#444" strokeWidth="3" /></R></button>
        <button aria-label="フィット" className="flex w-[17px] items-center gap-[2px]"><R className="h-[10px] w-[10px]"><circle cx="24" cy="24" r="18" fill="#fff" stroke="#666" strokeWidth="4" /><circle cx="24" cy="24" r="8" fill="#9ac3dd" stroke="#555" strokeWidth="3" /><path d="M36 37l14 14" stroke="#555" strokeWidth="7" /></R><Caret /></button>
        <button aria-label="表示設定" className="flex w-[16px] items-center gap-[2px]"><R className="h-[10px] w-[10px]"><path d="M3 5h48v34H3z" fill="#7aa6dd" stroke="#777" strokeWidth="5" /><path d="M14 49h28M22 39h10v10H22z" fill="#777" stroke="#777" strokeWidth="4" /></R><Caret /></button>
        <button aria-label="環境" className="flex w-[16px] items-center gap-[2px]"><R className="h-[10px] w-[10px]"><path d="M3 4h48v46H3z" fill="#a2a2a8" stroke="#888" strokeWidth="3" /></R><Caret /></button>
        <button aria-label="ビューポート" className="flex w-[16px] items-center gap-[2px]"><R className="h-[10px] w-[10px]"><path d="M3 7h48v40H3z" fill="#9cc0ec" stroke="#5578a8" strokeWidth="5" /><path d="M27 7v40M3 27h48" stroke="#5578a8" strokeWidth="5" /></R><Caret /></button>
        <div className="mr-[4px] h-[12px] w-px bg-[#ccc]" />
        <div className="flex gap-[5px]">
          {shades.map((c, i) => (
            <button key={c} aria-label={`シェーディング ${i + 1}`}><R className="h-[8px] w-[8px]"><path d={wire} fill={c} stroke="#557" strokeWidth={i ? 3 : 0} /><path d="M6 15l21 11 21-11M27 26v24" stroke="#35596a" strokeWidth={i ? 4 : 1} /></R></button>
          ))}
          {[0, 1, 2].map(i => (
            <button key={i} aria-label={`ワイヤフレーム ${i + 1}`}><R className="h-[8px] w-[8px]"><path d={wire} fill="#fff" stroke="#666" strokeWidth="4" /><path d="M6 15l21 11 21-11M27 26v24" stroke="#666" strokeWidth="4" />{i < 2 && <path d="M6 39l21-13 21 13M27 4v22" stroke="#888" strokeWidth="3" strokeDasharray={i ? '5 4' : undefined} />}</R></button>
          ))}
        </div>
      </div>
    </div>
  )
}

function Viewport() {
  return (
    <main className="relative flex-1 overflow-hidden bg-white">
      <Model />
      <span className="absolute top-[149px] left-[348px] h-[12px] w-[20px] bg-white/90 text-center text-[5px] leading-[12px] font-medium whitespace-nowrap">エッジ 1</span>
      <span className="absolute top-[365px] left-[346px] h-[12px] w-[22px] bg-white/90 text-center text-[5px] leading-[12px] font-bold whitespace-nowrap">エッジ 2</span>
      <Browser />
      <ViewCube />
      <PatchDialog />
      <NavBar />
      <span className="absolute right-[8px] bottom-[4px] font-medium text-[#222]">2 個の選択</span>
    </main>
  )
}

/* ---------- timeline ---------- */

const playback: [string, string][] = [
  ['最初へ', 'M6 8h6v38H6zM48 8v38L15 27z'],
  ['前へ', 'M30 10v34L4 27zM34 18h12v18H34z'],
  ['再生', 'M8 2l42 25L8 52z'],
  ['次へ', 'M24 10v34l26-17zM8 18h12v18H8z'],
  ['最後へ', 'M42 8h6v38h-6zM6 8v38l33-19z'],
]

const sketchArt = <>
  <path d="M6 6h40v40H6zM6 19h40M6 33h40M19 6v40M33 6v40" stroke="#a8bccb" strokeWidth="3" />
  <path d="M20 42l4-10 22-22 6 6-22 22z" fill="#f0a14a" />
</>
const patchArt = <path d="M3 5h48v46H32c0-12-6-20-16-22H3z" fill={OR} />

const timeline: ReactNode[] = [
  sketchArt, patchArt, sketchArt, patchArt, <MoveArrows />, <MoveArrows />,
  <path d="M31 50l4-11 9-8 6 6-9 9z" fill="#e8c04a" />,
  createIcons[1][1], createIcons[7][1], modifyIcons[2][1],
  <><circle cx="18" cy="16" r="12" fill={OR} /><circle cx="38" cy="18" r="12" fill="#f4c7a6" /><path d="M14 26h28l-4 16-14 8z" fill={OR} /><circle cx="33" cy="39" r="9" fill="#fff" stroke="#999" strokeWidth="3" /></>,
  patchArt,
]

function Timeline() {
  return (
    <footer className="flex h-[26px] shrink-0 items-center border-t border-[#e0e0e0] bg-[#f1f1f1] pl-[2px]">
      <div className="flex w-[65px] shrink-0 justify-around">
        {playback.map(([name, d]) => (
          <button key={name} aria-label={name} className="flex"><R className="h-[8px] w-[8px]"><path d={d} fill="#555" /></R></button>
        ))}
      </div>
      <div className="ml-[7px] flex w-[150px] shrink-0 flex-col pt-px">
        <div className="flex justify-around">
          {timeline.map((art, i) => (
            <button key={i} aria-label={`履歴 ${i + 1}`} className={`flex h-[13px] w-[12px] items-center justify-center ${i === 6 ? 'bg-[#0c95d8]' : ''}`}>
              <R className="h-[10px] w-[10px]">{art}</R>
            </button>
          ))}
        </div>
        <svg viewBox="0 0 450 9" className="h-[3px] w-full" fill="none" aria-hidden="true">
          <path d="M19 0v7h412V0M56 0v7M94 0v7M131 0v7M169 0v7M206 0v7M244 0v7M281 0v7M319 0v7M356 0v7M394 0v7" stroke="#bbb" strokeWidth="3" />
        </svg>
      </div>
      <svg viewBox="0 0 24 54" className="-ml-[4px] h-[18px] w-[8px] shrink-0" aria-hidden="true">
        <path d="M2 2h20v8l-8 7v37h-4V17L2 10z" fill="#555" />
      </svg>
      <button aria-label="タイムライン設定" className="mr-[7px] ml-auto"><NodeIcon kind="gear" /></button>
    </footer>
  )
}

export default function App() {
  return (
    <div className="flex h-screen flex-col overflow-hidden bg-white font-['Open_Sans','Noto_Sans_CJK_JP',sans-serif] text-[6px] leading-[8px] text-[#3f3f3f] [font-feature-settings:'palt']">
      <TitleBar />
      <TabBar />
      <Ribbon />
      <Viewport />
      <Timeline />
    </div>
  )
}
